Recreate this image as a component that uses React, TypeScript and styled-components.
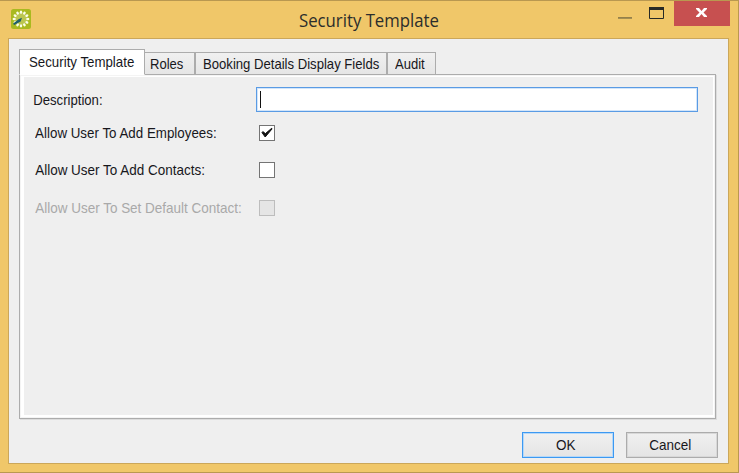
import React from "react";
import styled, { createGlobalStyle } from "styled-components";

const GlobalStyle = createGlobalStyle`
  * { box-sizing: border-box; }
  body { margin: 0; overflow: hidden; }
`;

const Window = styled.div`
  width: 739px;
  height: 473px;
  padding: 0 9px 8px 8px;
  display: flex;
  flex-direction: column;
  background: #f0c769;
  border: solid #b99850;
  border-width: 1px 1px 1px 0;
  font: 15px/18px "Liberation Sans", Arial, sans-serif;
  color: #17171c;
`;

const TitleBar = styled.header`
  height: 37px;
  flex: none;
  display: flex;
  align-items: flex-start;
`;

const AppIcon = styled.svg`
  width: 20px;
  height: 20px;
  margin: 8px 0 0 3px;
  flex: none;
`;

const Title = styled.h1`
  flex: 1;
  margin: 7px 0 0 268px;
  font: 400 18px/24px "Open Sans", "Noto Sans", sans-serif;
  color: #2b2d2c;
  white-space: nowrap;
`;

const WindowControls = styled.div`
  display: flex;
  height: 25px;
  margin-right: -1px;
`;

const ControlIcon = styled.svg`
  width: 62px;
  height: 25px;
`;

const CloseButton = styled.button`
  width: 56px;
  height: 25px;
  padding: 0;
  border: 0;
  background: #c75050;
  display: flex;
`;

const Client = styled.main`
  flex: 1;
  min-height: 0;
  padding: 10px 12px 5px 10px;
  display: flex;
  flex-direction: column;
  background: #efefef;
  border: 1px solid #cba75a;
`;

const TabList = styled.div`
  display: flex;
  align-items: flex-end;
  height: 26px;
  flex: none;
  position: relative;
  z-index: 1;
  margin-bottom: -1px;
`;

const Tab = styled.button<{ $active?: boolean; $width: number }>`
  width: ${(p) => p.$width}px;
  height: ${(p) => (p.$active ? 26 : 23)}px;
  padding: ${(p) => (p.$active ? "3px 0 0 9px" : "2px 0 0 5px")};
  border: 1px solid #acacac;
  border-left-width: ${(p) => (p.$active ? 1 : 0)}px;
  border-right-width: 1px;
  border-bottom-color: ${(p) => (p.$active ? "#fff" : "#acacac")};
  background: ${(p) => (p.$active ? "#fff" : "linear-gradient(#f0f0f0, #e6e6e6)")};
  display: flex;
  align-items: flex-start;
  font: inherit;
  color: inherit;

  & + & + & {
    border-left-width: 1px;
    padding-left: 6.5px;
  }
`;

const Label = styled.span<{ $scale: number; $center?: boolean }>`
  display: block;
  white-space: nowrap;
  transform: scaleX(${(p) => p.$scale});
  transform-origin: ${(p) => (p.$center ? "center" : "left")};
`;

const Panel = styled.section`
  height: 345px;
  flex: none;
  padding: 7px 12px 0 8px;
  border: 1px solid #acacac;
  box-shadow: inset 0 0 0 1px #f4f4f4, inset 4px 0 #fff, inset 0 2px #fff,
    inset -2px -3px #fff, 1px 1px #dcdcdc;
`;

const FieldRow = styled.div<{ $height: number; $indent: number; $muted?: boolean }>`
  display: grid;
  grid-template-columns: 222px 1fr;
  height: ${(p) => p.$height}px;
  align-items: center;
  color: ${(p) => (p.$muted ? "#a9a9a9" : "inherit")};

  & > ${Label} {
    padding-left: ${(p) => p.$indent}px;
  }

  &:first-child > ${Label} {
    padding-top: 2px;
  }
`;

const TextField = styled.div`
  height: 25px;
  margin: 0 5px 0 5.5px;
  padding: 3px 0 0 3px;
  border: 1px solid #5a9be4;
  box-shadow: inset 0 0 0 1px #d2e5fa;
  background: #fff;
`;

const Caret = styled.span`
  display: block;
  width: 1px;
  height: 17px;
  background: #111;
`;

const CheckBox = styled.div<{ $disabled?: boolean }>`
  width: 16px;
  height: 16px;
  margin-left: 9px;
  border: 1px solid ${(p) => (p.$disabled ? "#bdbdbd" : "#747474")};
  background: ${(p) => (p.$disabled ? "#e5e5e5" : "#fff")};

  svg {
    display: block;
  }
`;

const Actions = styled.footer`
  display: flex;
  justify-content: flex-end;
  gap: 12px;
  margin: 13px -2px 0 0;
`;

const ActionButton = styled.button<{ $primary?: boolean }>`
  width: 92px;
  height: 26px;
  padding: 0 4px 0 0;
  display: flex;
  justify-content: center;
  align-items: center;
  font: inherit;
  color: inherit;
  border: 1px solid ${(p) => (p.$primary ? "#3c99f2" : "#acacac")};
  box-shadow: inset 0 0 0 1px ${(p) => (p.$primary ? "#b5d8f8" : "#d8d8d8")};
  background: linear-gradient(#f0f0f0, #e4e4e4);
`;

const petals = Array.from({ length: 12 }, (_, i) => i * 30);

export default function App() {
  return (
    <>
      <GlobalStyle />
      <Window>
        <TitleBar>
          <AppIcon viewBox="0 0 20 20">
            <rect width="20" height="20" rx="2.5" fill="#a9b91f" />
            <circle cx="10" cy="10" r="6.5" fill="#bcc650" />
            {petals.map((a) => (
              <ellipse
                key={a}
                cx="10"
                cy="3.2"
                rx="1.25"
                ry="1.6"
                fill="#fbfde8"
                transform={`rotate(${a} 10 10)`}
              />
            ))}
            <path d="M11 8.8 7.5 10.2 2 14.8l1.2 1.3L9.6 12.4Z" fill="#20606b" />
          </AppIcon>
          <Title>
            <Label $scale={0.93}>Security Template</Label>
          </Title>
          <WindowControls>
            <ControlIcon viewBox="0 0 62 25">
              <path d="M6 16.9h14" stroke="#94804b" strokeWidth="1.8" />
              <path d="M37.5 6.5h14v11h-14Z" fill="none" stroke="#272a26" />
              <path d="M37 6h15v3H37Z" fill="#272a26" />
            </ControlIcon>
            <CloseButton aria-label="Close">
              <svg width="56" height="25" viewBox="0 0 56 25">
                <path
                  d="M22 7h3l2.5 3L30 7h3v1l-3.5 3.5L33 15v1h-3l-2.5-3L25 16h-3v-1l3.5-3.5L22 8Z"
                  fill="#fff"
                />
              </svg>
            </CloseButton>
          </WindowControls>
        </TitleBar>
        <Client>
          <TabList role="tablist">
            <Tab $active $width={126}>
              <Label $scale={0.885}>Security Template</Label>
            </Tab>
            <Tab $width={50}>
              <Label $scale={0.87}>Roles</Label>
            </Tab>
            <Tab $width={192}>
              <Label $scale={0.874}>Booking Details Display Fields</Label>
            </Tab>
            <Tab $width={49}>
              <Label $scale={0.87}>Audit</Label>
            </Tab>
          </TabList>
          <Panel>
            <FieldRow $height={34} $indent={6}>
              <Label $scale={0.875}>Description:</Label>
              <TextField>
                <Caret />
              </TextField>
            </FieldRow>
            <FieldRow $height={34} $indent={8}>
              <Label $scale={0.89}>Allow User To Add Employees:</Label>
              <CheckBox>
                <svg width="14" height="14" viewBox="0 0 14 14">
                  <path d="M2 6.6 5.2 11 11.8 3.2V2.2L5.4 7.6 2.8 5.6Z" fill="#111" stroke="#111" />
                </svg>
              </CheckBox>
            </FieldRow>
            <FieldRow $height={40} $indent={8}>
              <Label $scale={0.898}>Allow User To Add Contacts:</Label>
              <CheckBox />
            </FieldRow>
            <FieldRow $height={36} $indent={8} $muted>
              <Label $scale={0.899}>Allow User To Set Default Contact:</Label>
              <CheckBox $disabled />
            </FieldRow>
          </Panel>
          <Actions>
            <ActionButton $primary>
              <Label $scale={0.9} $center>
                OK
              </Label>
            </ActionButton>
            <ActionButton>
              <Label $scale={0.9} $center>
                Cancel
              </Label>
            </ActionButton>
          </Actions>
        </Client>
      </Window>
    </>
  );
}
